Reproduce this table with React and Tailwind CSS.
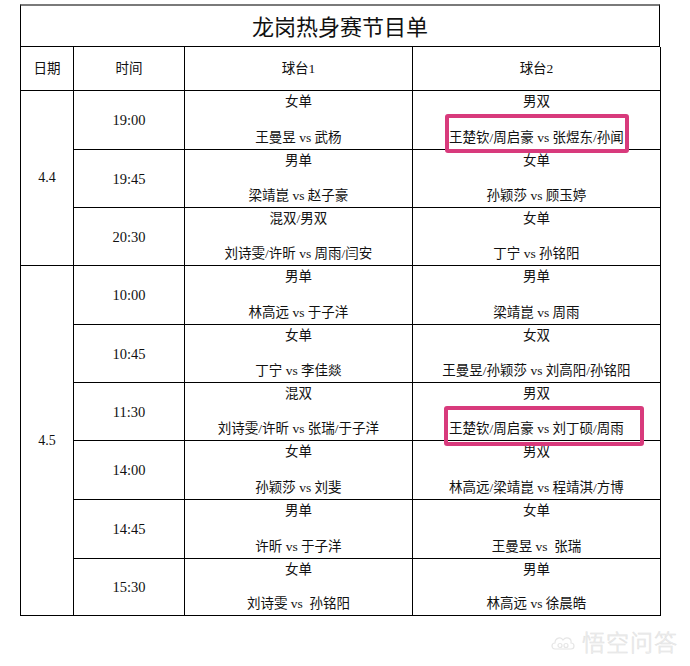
import React from 'react';

const font = { fontFamily: '"Liberation Serif", "Noto Sans CJK SC", serif' };

const days = [
  {
    date: '4.4',
    span: 'row-span-3',
    rows: [
      { time: '19:00', t1: ['女单', '王曼昱 vs 武杨'], t2: ['男双', '王楚钦/周启豪 vs 张煜东/孙闻'], mark: 'a' },
      { time: '19:45', t1: ['男单', '梁靖崑 vs 赵子豪'], t2: ['女单', '孙颖莎 vs 顾玉婷'] },
      { time: '20:30', t1: ['混双/男双', '刘诗雯/许昕 vs 周雨/闫安'], t2: ['女单', '丁宁 vs 孙铭阳'] },
    ],
  },
  {
    date: '4.5',
    span: 'row-span-6',
    rows: [
      { time: '10:00', t1: ['男单', '林高远 vs 于子洋'], t2: ['男单', '梁靖崑 vs 周雨'] },
      { time: '10:45', t1: ['女单', '丁宁 vs 李佳燚'], t2: ['女双', '王曼昱/孙颖莎 vs 刘高阳/孙铭阳'] },
      { time: '11:30', t1: ['混双', '刘诗雯/许昕 vs 张瑞/于子洋'], t2: ['男双', '王楚钦/周启豪 vs 刘丁硕/周雨'], mark: 'b' },
      { time: '14:00', t1: ['女单', '孙颖莎 vs 刘斐'], t2: ['男双', '林高远/梁靖崑 vs 程靖淇/方博'] },
      { time: '14:45', t1: ['男单', '许昕 vs 于子洋'], t2: ['女单', '王曼昱 vs  张瑞'] },
      { time: '15:30', t1: ['女单', '刘诗雯 vs  孙铭阳'], t2: ['男单', '林高远 vs 徐晨皓'] },
    ],
  },
];

function Match({ pair }) {
  return (
    <div className="flex flex-col justify-between items-center h-full py-[3px] whitespace-pre">
      <span>{pair[0]}</span>
      <span>{pair[1]}</span>
    </div>
  );
}

function Cell({ children, className = '' }) {
  return <div className={'border-r border-b border-black ' + className}>{children}</div>;
}

export default function App() {
  return (
    <div className="relative w-[690px] h-[666px] bg-white text-[#111] text-[13.5px] leading-[16px]" style={font}>
      <div className="pt-[4px] pl-[20px]">
        <div className="w-[640px] h-[43px] pt-[4px] border-t-2 border-t-[#7a7a7a] border-x border-b border-black flex items-center justify-center text-[22px] leading-none">
          龙岗热身赛节目单
        </div>
        <div className="w-[640px] grid grid-cols-[53px_111px_228px_248px] grid-rows-[44px_59px_58px_58px_59px_58px_58px_59px_59px_57px] border-l border-black">
          <Cell className="flex items-center justify-center">日期</Cell>
          <Cell className="flex items-center justify-center">时间</Cell>
          <Cell className="flex items-center justify-center">球台1</Cell>
          <Cell className="flex items-center justify-center">球台2</Cell>
          {days.map(day => (
            <React.Fragment key={day.date}>
              <Cell className={day.span + ' col-start-1 flex items-center justify-center text-[14px]'}>{day.date}</Cell>
              {day.rows.map(r => (
                <React.Fragment key={r.time}>
                  <Cell className="col-start-2 flex items-center justify-center text-[14.5px]">{r.time}</Cell>
                  <Cell>
                    <Match pair={r.t1} />
                  </Cell>
                  <Cell className="relative">
                    <Match pair={r.t2} />
                    {r.mark === 'a' && (
                      <div className="absolute z-10 left-[32px] top-[23px] w-[184px] h-[39px] border-4 border-[#d83a7c] rounded-[3px]" />
                    )}
                    {r.mark === 'b' && (
                      <div className="absolute z-10 left-[31px] top-[23px] w-[200px] h-[40px] border-4 border-[#d83a7c] rounded-[3px]" />
                    )}
                  </Cell>
                </React.Fragment>
              ))}
            </React.Fragment>
          ))}
        </div>
      </div>
      <div className="flex justify-end items-center gap-[6px] pr-[12px] mt-[14px]">
        <svg width="26" height="18" viewBox="0 0 26 18" fill="none" stroke="#e6e6e6" strokeWidth="1.2">
          <path d="M5 16 C1 16 1 10 5 10 C5 5 11 3 13 7 C16 3 22 5 21 10 C25 10 25 16 21 16 Z" />
          <circle cx="10" cy="12.5" r="2" />
          <circle cx="16" cy="12.5" r="2" />
        </svg>
        <span
          className="text-[23px] leading-none text-[#f4f4f4] font-light tracking-[1px] [-webkit-text-stroke:0.6px_#e2e2e2]"
          style={{ fontFamily: '"Noto Sans CJK SC", sans-serif' }}
        >
          悟空问答
        </span>
      </div>
    </div>
  );
}
